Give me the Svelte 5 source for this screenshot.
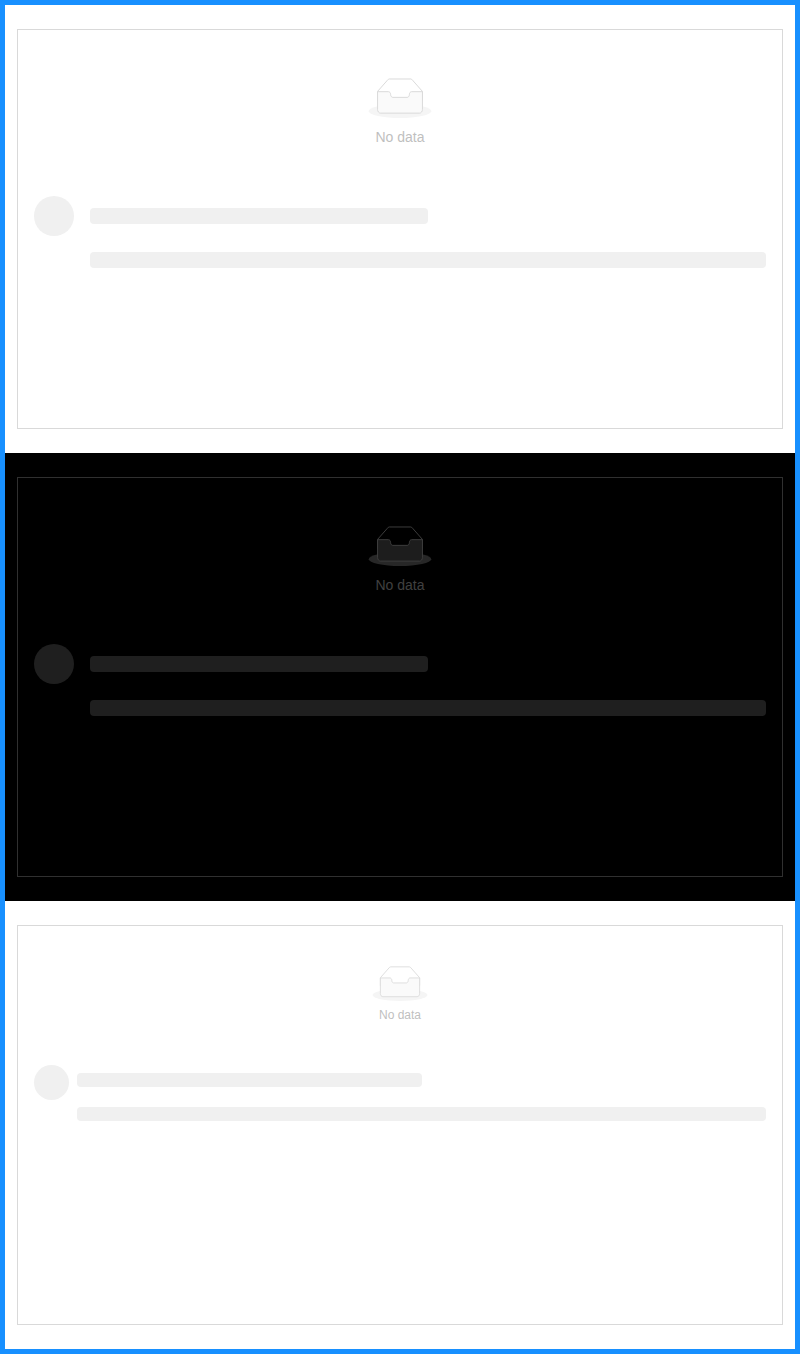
<script>
  const panels = [{ theme: 'light' }, { theme: 'dark' }, { theme: 'light', compact: true }];
</script>

<main>
  {#each panels as panel}
    <section class={panel.theme} class:compact={panel.compact}>
      <div class="box">
        <div class="empty">
          <svg viewBox="0 0 64 41" aria-hidden="true">
            <g transform="translate(0 1)" fill="none" fill-rule="evenodd">
              <ellipse class="shadow" cx="32" cy="33" rx="32" ry="7" />
              <g class="tray" fill-rule="nonzero">
                <path d="M55 12.76L44.854 1.258C44.367.474 43.656 0 42.907 0H21.093c-.749 0-1.46.474-1.947 1.257L9 12.761V22h46v-9.24z" />
                <path class="front" d="M41.613 15.931c0-1.605.994-2.93 2.227-2.931H55v18.137C55 33.26 53.68 35 52.05 35h-40.1C10.32 35 9 33.259 9 31.137V13h11.16c1.233 0 2.227 1.323 2.227 2.928v.022c0 1.605 1.005 2.901 2.237 2.901h14.752c1.232 0 2.237-1.308 2.237-2.913v-.007z" />
              </g>
            </g>
          </svg>
          <p>No data</p>
        </div>
        <div class="skeleton">
          <span class="avatar"></span>
          <div class="content">
            <div class="title"></div>
            <div class="line"></div>
          </div>
        </div>
      </div>
    </section>
  {/each}
</main>

<style>
  main {
    box-sizing: border-box;
    height: 1354px;
    border: 5px solid #1890ff;
    font: 14px/22px "Liberation Sans", Arial, sans-serif;
  }
  section {
    --bone: #f0f0f0;
    box-sizing: border-box;
    height: 448px;
    padding: 24px 12px;
    background: #fff;
  }
  .box {
    box-sizing: border-box;
    height: 400px;
    border: 1px solid #d9d9d9;
    padding: 16px;
  }
  .empty {
    margin: 32px 0;
    text-align: center;
    color: #bfbfbf;
  }
  svg {
    display: block;
    width: 64px;
    height: 40px;
    margin: 0 auto 8px;
  }
  p { margin: 0; }
  .shadow { fill: #f5f5f5; }
  .tray { stroke: #d9d9d9; }
  .front { fill: #fafafa; }
  .skeleton {
    display: flex;
    gap: 16px;
    padding-top: 16px;
  }
  .avatar {
    width: 40px;
    height: 40px;
    flex: none;
    border-radius: 50%;
    background: var(--bone);
  }
  .content { flex: 1; }
  .title, .line {
    height: 16px;
    border-radius: 4px;
    background: var(--bone);
  }
  .title {
    width: 50%;
    margin-top: 12px;
  }
  .line { margin-top: 28px; }
  .dark {
    --bone: #1f1f1f;
    background: #000;
  }
  .dark .box { border-color: #303030; }
  .dark .empty { color: #404040; }
  .dark .shadow { fill: #272727; }
  .dark .tray { stroke: #3e3e3e; }
  .dark .front { fill: #1d1d1d; }
  .compact { font-size: 12px; line-height: 20px; }
  .compact .empty { margin: 24px 0 32px; }
  .compact svg { width: 56px; height: 35px; margin-bottom: 4px; }
  .compact .skeleton { gap: 8px; padding-top: 8px; }
  .compact .avatar { width: 35px; height: 35px; }
  .compact .title, .compact .line { height: 14px; }
  .compact .title { margin-top: 8px; }
  .compact .line { margin-top: 20px; }
</style>
